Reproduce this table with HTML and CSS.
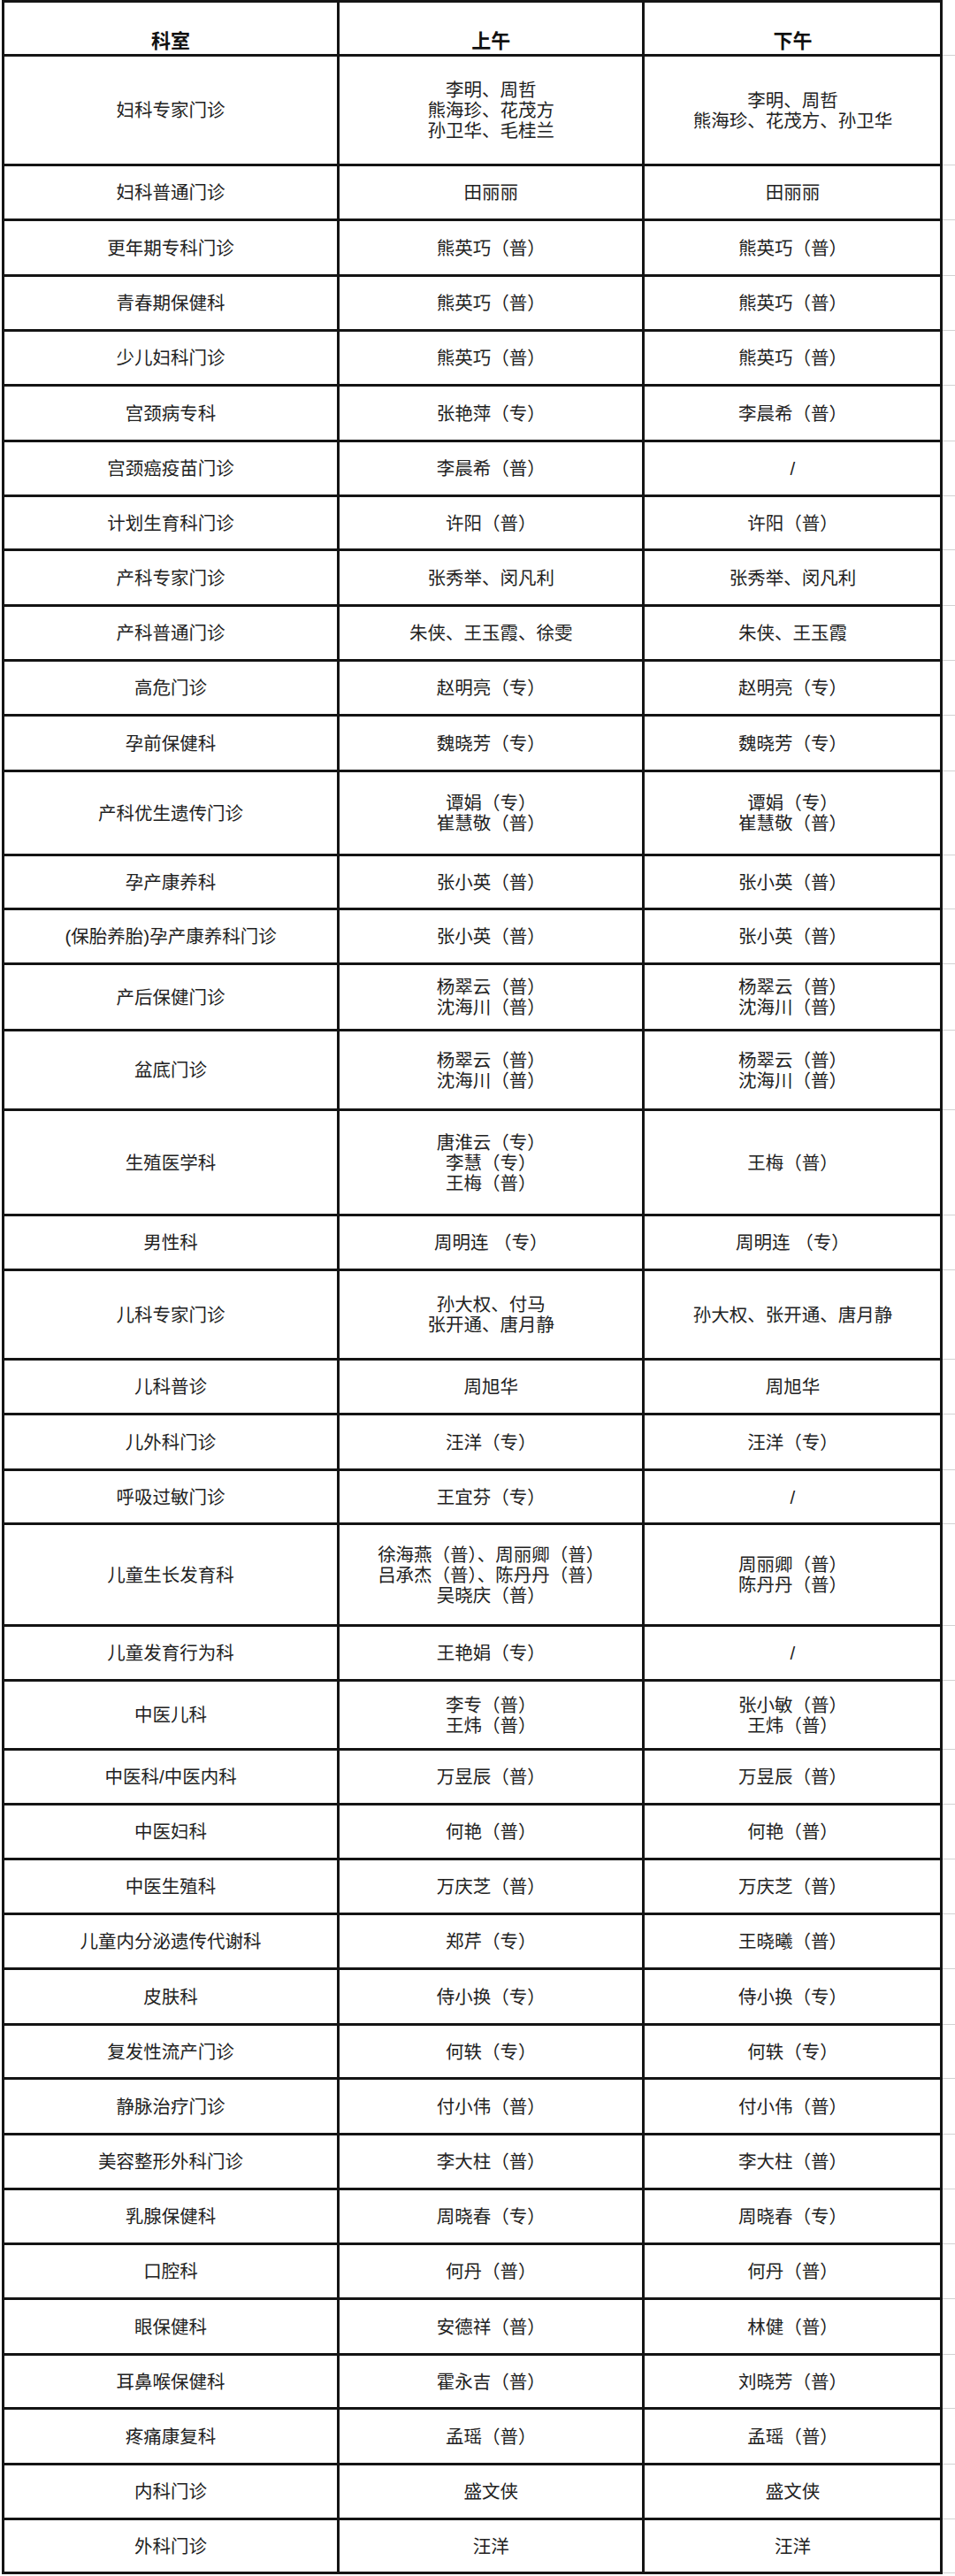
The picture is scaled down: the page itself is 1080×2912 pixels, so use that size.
FILE: index.html
```html
<!DOCTYPE html>
<html lang="zh-CN">
<head>
<meta charset="utf-8">
<title>门诊排班表</title>
<link rel="stylesheet" href="styles.css">
</head>
<body>
<table class="sched">
  <colgroup>
    <col class="c-dept">
    <col class="c-am">
    <col class="c-pm">
    <col class="c-edge">
  </colgroup>
  <thead>
    <tr class="head"><th>科室</th><th>上午</th><th>下午</th><td class="edge top"></td></tr>
  </thead>
  <tbody>
    <tr class="h124"><td>妇科专家门诊</td><td><div class="ln">李明、周哲</div><div class="ln">熊海珍、花茂方</div><div class="ln">孙卫华、毛桂兰</div></td><td><div class="ln">李明、周哲</div><div class="ln">熊海珍、花茂方、孙卫华</div></td><td class="edge"></td></tr>
    <tr><td>妇科普通门诊</td><td>田丽丽</td><td>田丽丽</td><td class="edge"></td></tr>
    <tr class="l"><td>更年期专科门诊</td><td>熊英巧（普）</td><td>熊英巧（普）</td><td class="edge"></td></tr>
    <tr><td>青春期保健科</td><td>熊英巧（普）</td><td>熊英巧（普）</td><td class="edge"></td></tr>
    <tr><td>少儿妇科门诊</td><td>熊英巧（普）</td><td>熊英巧（普）</td><td class="edge"></td></tr>
    <tr class="l"><td>宫颈病专科</td><td>张艳萍（专）</td><td>李晨希（普）</td><td class="edge"></td></tr>
    <tr><td>宫颈癌疫苗门诊</td><td>李晨希（普）</td><td>/</td><td class="edge"></td></tr>
    <tr class="s"><td>计划生育科门诊</td><td>许阳（普）</td><td>许阳（普）</td><td class="edge"></td></tr>
    <tr class="l"><td>产科专家门诊</td><td>张秀举、闵凡利</td><td>张秀举、闵凡利</td><td class="edge"></td></tr>
    <tr><td>产科普通门诊</td><td>朱侠、王玉霞、徐雯</td><td>朱侠、王玉霞</td><td class="edge"></td></tr>
    <tr><td>高危门诊</td><td>赵明亮（专）</td><td>赵明亮（专）</td><td class="edge"></td></tr>
    <tr class="l"><td>孕前保健科</td><td>魏晓芳（专）</td><td>魏晓芳（专）</td><td class="edge"></td></tr>
    <tr class="h95"><td>产科优生遗传门诊</td><td><div class="ln">谭娟（专）</div><div class="ln">崔慧敬（普）</div></td><td><div class="ln">谭娟（专）</div><div class="ln">崔慧敬（普）</div></td><td class="edge"></td></tr>
    <tr class="s"><td>孕产康养科</td><td>张小英（普）</td><td>张小英（普）</td><td class="edge"></td></tr>
    <tr><td>(保胎养胎)孕产康养科门诊</td><td>张小英（普）</td><td>张小英（普）</td><td class="edge"></td></tr>
    <tr class="h75"><td>产后保健门诊</td><td><div class="ln">杨翠云（普）</div><div class="ln">沈海川（普）</div></td><td><div class="ln">杨翠云（普）</div><div class="ln">沈海川（普）</div></td><td class="edge"></td></tr>
    <tr class="h90"><td>盆底门诊</td><td><div class="ln">杨翠云（普）</div><div class="ln">沈海川（普）</div></td><td><div class="ln">杨翠云（普）</div><div class="ln">沈海川（普）</div></td><td class="edge"></td></tr>
    <tr class="h119"><td>生殖医学科</td><td><div class="ln">唐淮云（专）</div><div class="ln">李慧（专）</div><div class="ln">王梅（普）</div></td><td>王梅（普）</td><td class="edge"></td></tr>
    <tr><td>男性科</td><td>周明连 （专）</td><td>周明连 （专）</td><td class="edge"></td></tr>
    <tr class="h101"><td>儿科专家门诊</td><td><div class="ln">孙大权、付马</div><div class="ln">张开通、唐月静</div></td><td>孙大权、张开通、唐月静</td><td class="edge"></td></tr>
    <tr><td>儿科普诊</td><td>周旭华</td><td>周旭华</td><td class="edge"></td></tr>
    <tr class="l"><td>儿外科门诊</td><td>汪洋（专）</td><td>汪洋（专）</td><td class="edge"></td></tr>
    <tr class="s"><td>呼吸过敏门诊</td><td>王宜芬（专）</td><td>/</td><td class="edge"></td></tr>
    <tr class="h115"><td>儿童生长发育科</td><td><div class="ln">徐海燕（普）、周丽卿（普）</div><div class="ln">吕承杰（普）、陈丹丹（普）</div><div class="ln">吴晓庆（普）</div></td><td><div class="ln">周丽卿（普）</div><div class="ln">陈丹丹（普）</div></td><td class="edge"></td></tr>
    <tr><td>儿童发育行为科</td><td>王艳娟（专）</td><td>/</td><td class="edge"></td></tr>
    <tr class="h78"><td>中医儿科</td><td><div class="ln">李专（普）</div><div class="ln">王炜（普）</div></td><td><div class="ln">张小敏（普）</div><div class="ln">王炜（普）</div></td><td class="edge"></td></tr>
    <tr><td>中医科/中医内科</td><td>万昱辰（普）</td><td>万昱辰（普）</td><td class="edge"></td></tr>
    <tr><td>中医妇科</td><td>何艳（普）</td><td>何艳（普）</td><td class="edge"></td></tr>
    <tr><td>中医生殖科</td><td>万庆芝（普）</td><td>万庆芝（普）</td><td class="edge"></td></tr>
    <tr><td>儿童内分泌遗传代谢科</td><td>郑芹（专）</td><td>王晓曦（普）</td><td class="edge"></td></tr>
    <tr class="l"><td>皮肤科</td><td>侍小换（专）</td><td>侍小换（专）</td><td class="edge"></td></tr>
    <tr class="s"><td>复发性流产门诊</td><td>何轶（专）</td><td>何轶（专）</td><td class="edge"></td></tr>
    <tr class="l"><td>静脉治疗门诊</td><td>付小伟（普）</td><td>付小伟（普）</td><td class="edge"></td></tr>
    <tr><td>美容整形外科门诊</td><td>李大柱（普）</td><td>李大柱（普）</td><td class="edge"></td></tr>
    <tr><td>乳腺保健科</td><td>周晓春（专）</td><td>周晓春（专）</td><td class="edge"></td></tr>
    <tr><td>口腔科</td><td>何丹（普）</td><td>何丹（普）</td><td class="edge"></td></tr>
    <tr class="l"><td>眼保健科</td><td>安德祥（普）</td><td>林健（普）</td><td class="edge"></td></tr>
    <tr class="s"><td>耳鼻喉保健科</td><td>霍永吉（普）</td><td>刘晓芳（普）</td><td class="edge"></td></tr>
    <tr class="l"><td>疼痛康复科</td><td>孟瑶（普）</td><td>孟瑶（普）</td><td class="edge"></td></tr>
    <tr><td>内科门诊</td><td>盛文侠</td><td>盛文侠</td><td class="edge"></td></tr>
    <tr class="s"><td>外科门诊</td><td>汪洋</td><td>汪洋</td><td class="edge"></td></tr>
  </tbody>
</table>
</body>
</html>
```
FILE: styles.css
```css
html, body {
  margin: 0;
  padding: 0;
  background: #ffffff;
}

body {
  font-family: "Liberation Sans", "Noto Sans CJK SC", sans-serif;
  color: #222222;
}

.sched {
  border-collapse: collapse;
  table-layout: fixed;
  width: 1078px;
  margin-left: 2px;
}

.c-dept { width: 379px; }
.c-am { width: 345px; }
.c-pm { width: 337px; }
.c-edge { width: 15px; }

.sched th,
.sched td {
  border: 3px solid #141414;
  padding: 0;
  text-align: center;
  vertical-align: middle;
  font-size: 20.5px;
  line-height: 23px;
  font-weight: 400;
}

.sched th {
  font-size: 22px;
  font-weight: 700;
  color: #111111;
  vertical-align: bottom;
  padding-bottom: 3px;
}

.ln {
  height: 23px;
  line-height: 23px;
  white-space: nowrap;
}

.sched td.edge {
  border-top: 1px solid #d2d2d2;
  border-bottom: 1px solid #d2d2d2;
  border-right: none;
}

.sched td.edge.top {
  border-top: none;
}

.sched tr { height: 62px; }
.sched tr.head { height: 61px; }
.sched tr.s { height: 61px; }
.sched tr.l { height: 63px; }
.sched tr.h75 { height: 75px; }
.sched tr.h78 { height: 78px; }
.sched tr.h90 { height: 90px; }
.sched tr.h95 { height: 95px; }
.sched tr.h101 { height: 101px; }
.sched tr.h115 { height: 115px; }
.sched tr.h119 { height: 119px; }
.sched tr.h124 { height: 124px; }
```
